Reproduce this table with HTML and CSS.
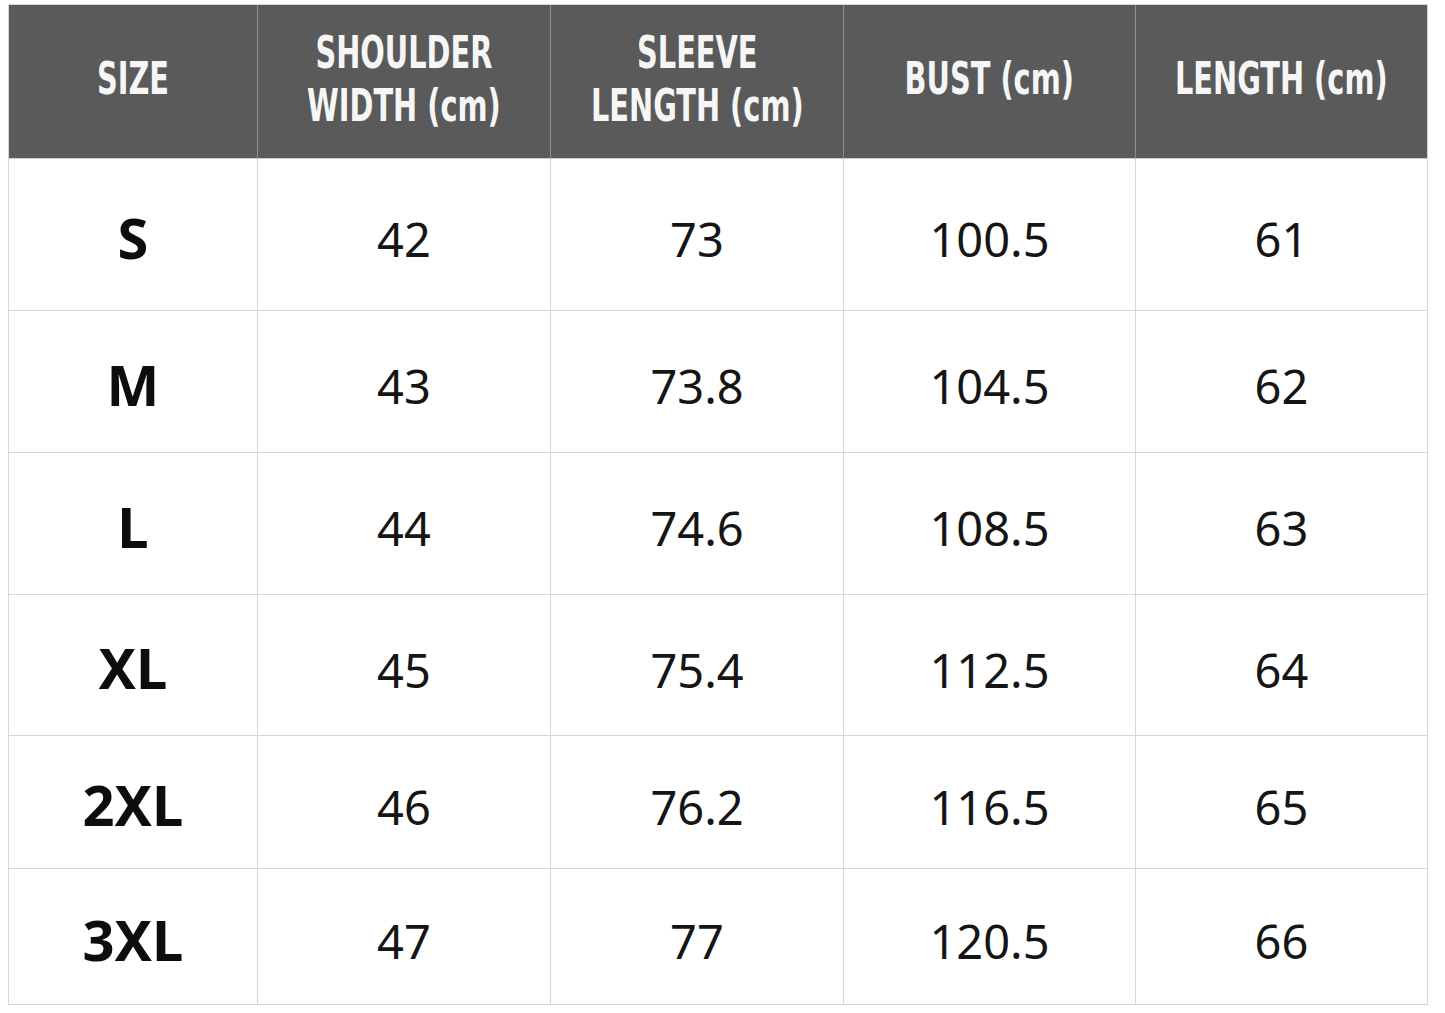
FILE: index.html
```html
<!DOCTYPE html>
<html>
<head>
<meta charset="utf-8">
<link rel="stylesheet" href="styles.css">
</head>
<body>
<div class="chart">
  <div class="hd"><span class="ht">SIZE</span></div>
  <div class="hd"><span class="ht">SHOULDER<br>WIDTH (cm)</span></div>
  <div class="hd"><span class="ht">SLEEVE<br>LENGTH (cm)</span></div>
  <div class="hd"><span class="ht">BUST (cm)</span></div>
  <div class="hd last"><span class="ht">LENGTH (cm)</span></div>

  <div class="sz">S</div><div class="c">42</div><div class="c">73</div><div class="c">100.5</div><div class="c last">61</div>
  <div class="sz">M</div><div class="c">43</div><div class="c">73.8</div><div class="c">104.5</div><div class="c last">62</div>
  <div class="sz">L</div><div class="c">44</div><div class="c">74.6</div><div class="c">108.5</div><div class="c last">63</div>
  <div class="sz">XL</div><div class="c">45</div><div class="c">75.4</div><div class="c">112.5</div><div class="c last">64</div>
  <div class="sz">2XL</div><div class="c">46</div><div class="c">76.2</div><div class="c">116.5</div><div class="c last">65</div>
  <div class="sz">3XL</div><div class="c">47</div><div class="c">77</div><div class="c">120.5</div><div class="c last">66</div>
</div>
</body>
</html>
```
FILE: styles.css
```css
* { box-sizing: border-box; }
html, body { background: #ffffff; }
body {
  margin: 4px 0 0 8px;
  font-family: "Noto Sans", "DejaVu Sans", sans-serif;
  color: #111111;
}
.chart {
  display: grid;
  width: 1420px;
  grid-template-columns: 249px 293px 293px 292px 292px;
  grid-template-rows: 154px 152px 142px 142px 141px 133px 136px;
  border-left: 1px solid #d6d6d6;
  border-top: 1px solid #d6d6d6;
}
.chart > div {
  display: flex;
  align-items: center;
  justify-content: center;
  border-right: 1px solid #d6d6d6;
  border-bottom: 1px solid #d6d6d6;
  overflow: visible;
}
.chart > .hd {
  background: #5a5a5a;
  border-right-color: #8e8e8e;
  border-bottom-color: #d0d0d0;
}
.chart > .hd.last { border-right-color: #d6d6d6; }
.ht {
  display: inline-block;
  font-family: "DejaVu Sans", "Liberation Sans", sans-serif;
  font-weight: 700;
  font-size: 44px;
  line-height: 53px;
  color: #f6f6f6;
  text-align: center;
  white-space: nowrap;
  transform: scaleX(0.655);
  margin-top: -6px;
}
.sz {
  font-weight: 700;
  font-size: 56px;
  line-height: 1;
  color: #0d0d0d;
  padding-top: 4px;
}
.c {
  font-weight: 400;
  font-size: 47px;
  line-height: 1;
  color: #151515;
  padding-top: 10px;
}
```
